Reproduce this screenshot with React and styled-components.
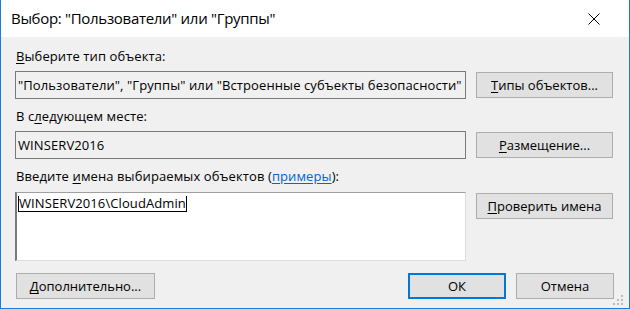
import React from 'react';
import styled, { createGlobalStyle } from 'styled-components';

const Global = createGlobalStyle`
  html, body { margin: 0; padding: 0; background: #f0f0f0; }
  body { font-family: "Open Sans", "Noto Sans", sans-serif; font-size: 13px; color: #000; }
`;

const Window = styled.div`
  width: 630px;
  height: 309px;
  box-sizing: border-box;
  border: 1px solid #1a7fd4;
  border-top: none;
  background: #f0f0f0;
  display: flex;
  flex-direction: column;
`;

const TitleBar = styled.div`
  height: 37px;
  background: #fff;
  display: flex;
  align-items: center;
  justify-content: space-between;
  padding: 0 0 0 10px;
`;

const Title = styled.span`
  font-size: 15px;
  letter-spacing: -0.3px;
  color: #000;
  margin-top: -1px;
`;

const Close = styled.div`
  width: 46px;
  height: 37px;
  display: flex;
  align-items: center;
  justify-content: center;
  margin-right: 12px;
`;

const Body = styled.div`
  flex: 1;
  padding: 11px 15px 0 14px;
  display: flex;
  flex-direction: column;
`;

const Label = styled.div`
  height: 16px;
  line-height: 16px;
  margin: 0 0 ${p => p.$mb || 7}px 1px;
  white-space: nowrap;
  letter-spacing: 0.1px;
`;

const Row = styled.div`
  display: grid;
  grid-template-columns: 451px 137px;
  column-gap: 10px;
  align-items: start;
  margin-bottom: ${p => p.$gap}px;
`;

const Field = styled.div`
  height: ${p => p.$h}px;
  box-sizing: border-box;
  border: 1px solid #7a7a7a;
  background: #f0f0f0;
  padding: 0 2px;
  line-height: ${p => p.$h - 2}px;
  white-space: nowrap;
  overflow: hidden;
  letter-spacing: 0.1px;
`;

const Area = styled.div`
  height: 69px;
  box-sizing: border-box;
  background: #fff;
  border-top: 1px solid #a0a0a0;
  border-left: 2px solid #7a7a7a;
  border-right: 1px solid #dcdcdc;
  border-bottom: 1px solid #dcdcdc;
  padding: 1px 1px;
`;

const Resolved = styled.span`
  display: inline-block;
  line-height: 15px;
  letter-spacing: 0.1px;
  border-left: 1px solid #000;
  border-right: 1px solid #000;
  border-bottom: 1px solid #000;
`;

const Button = styled.div`
  height: 26px;
  box-sizing: border-box;
  margin-top: 1px;
  width: ${p => p.$w || 137}px;
  background: #e1e1e1;
  border: ${p => (p.$default ? '2px solid #0078d7' : '1px solid #adadad')};
  display: flex;
  align-items: center;
  justify-content: center;
  white-space: nowrap;
`;

const U = styled.span`
  text-decoration: underline;
  text-underline-offset: 2px;
`;

const Link = styled.span`
  color: #0066cc;
  text-decoration: underline;
  text-underline-offset: 2px;
`;

const Footer = styled.div`
  display: flex;
  align-items: center;
  margin-top: 11px;
  padding-left: 1px;
`;

const Spacer = styled.div`
  flex: 1;
`;

const FooterGap = styled.div`
  width: 10px;
`;

const Grip = styled.svg`
  position: absolute;
  right: 5px;
  bottom: 2px;
`;

const Frame = styled.div`
  position: relative;
  width: 630px;
  height: 309px;
`;

export default function App() {
  return (
    <Frame>
      <Global />
      <Window>
        <TitleBar>
          <Title>Выбор: "Пользователи" или "Группы"</Title>
          <Close>
            <svg width="12" height="12" viewBox="0 0 12 12">
              <path d="M0.5 0.5 L11.5 11.5 M11.5 0.5 L0.5 11.5" stroke="#000" strokeWidth="1" />
            </svg>
          </Close>
        </TitleBar>
        <Body>
          <Label><U>В</U>ыберите тип объекта:</Label>
          <Row $gap={9}>
            <Field $h={28}>"Пользователи", "Группы" или "Встроенные субъекты безопасности"</Field>
            <Button><U>Т</U>ипы объектов...</Button>
          </Row>
          <Label>В с<U>л</U>едующем месте:</Label>
          <Row $gap={9}>
            <Field $h={28}>WINSERV2016</Field>
            <Button><U>Р</U>азмещение...</Button>
          </Row>
          <Label $mb={8}>Введите <U>и</U>мена выбираемых объектов (<Link>примеры</Link>):</Label>
          <Row $gap={0}>
            <Area>
              <Resolved>WINSERV2016\CloudAdmin</Resolved>
            </Area>
            <Button><U>П</U>роверить имена</Button>
          </Row>
          <Footer>
            <Button $w={139}><U>Д</U>ополнительно...</Button>
            <Spacer />
            <Button $w={98} $default>ОК</Button>
            <FooterGap />
            <Button $w={98}>Отмена</Button>
          </Footer>
        </Body>
      </Window>
      <Grip width="12" height="12" viewBox="0 0 12 12">
        <rect x="8" y="0" width="2" height="2" fill="#bcbcbc" />
        <rect x="4" y="4" width="2" height="2" fill="#bcbcbc" />
        <rect x="8" y="4" width="2" height="2" fill="#bcbcbc" />
        <rect x="0" y="8" width="2" height="2" fill="#bcbcbc" />
        <rect x="4" y="8" width="2" height="2" fill="#bcbcbc" />
        <rect x="8" y="8" width="2" height="2" fill="#bcbcbc" />
      </Grip>
    </Frame>
  );
}
